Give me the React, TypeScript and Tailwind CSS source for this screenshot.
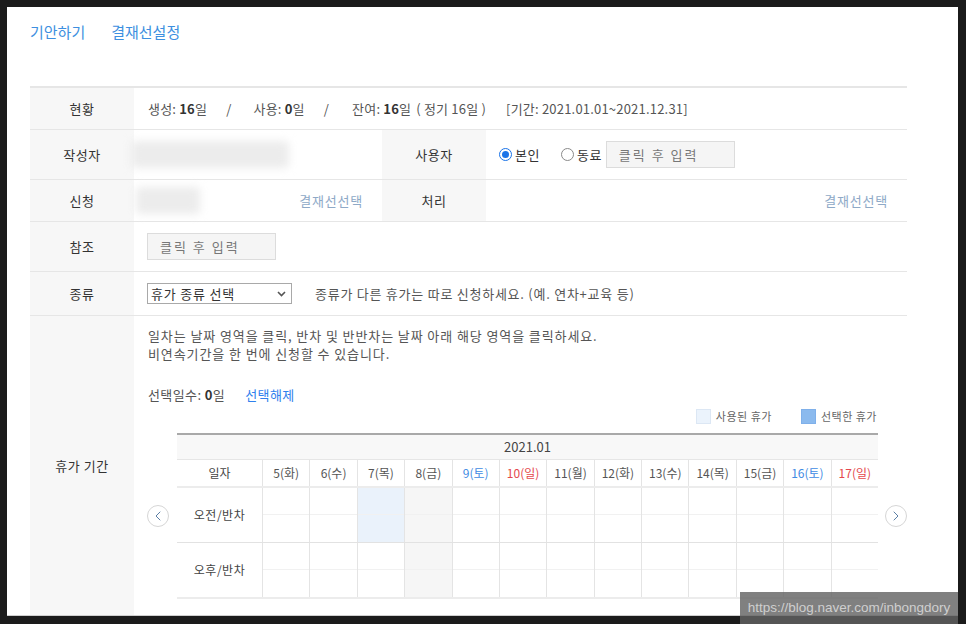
import { ChevronLeft, ChevronRight } from 'lucide-react';

const FONT = { fontFamily: '"Noto Sans CJK KR", "Noto Sans", sans-serif' };

interface Day {
  label: string;
  kind: 'weekday' | 'sat' | 'sun';
}

const DAYS: Day[] = [
  { label: '5(화)', kind: 'weekday' },
  { label: '6(수)', kind: 'weekday' },
  { label: '7(목)', kind: 'weekday' },
  { label: '8(금)', kind: 'weekday' },
  { label: '9(토)', kind: 'sat' },
  { label: '10(일)', kind: 'sun' },
  { label: '11(월)', kind: 'weekday' },
  { label: '12(화)', kind: 'weekday' },
  { label: '13(수)', kind: 'weekday' },
  { label: '14(목)', kind: 'weekday' },
  { label: '15(금)', kind: 'weekday' },
  { label: '16(토)', kind: 'sat' },
  { label: '17(일)', kind: 'sun' },
];

const DAY_COLOR: Record<Day['kind'], string> = {
  weekday: 'text-[#555]',
  sat: 'text-[#3f8be3]',
  sun: 'text-[#e5484d]',
};

function Label({ children, className = '' }: { children: React.ReactNode; className?: string }) {
  return (
    <div
      className={`flex w-[104px] shrink-0 items-center justify-center bg-[#f7f7f7] text-[13px] tracking-[0.5px] text-[#333] ${className}`}
    >
      {children}
    </div>
  );
}

function Radio({ checked, label }: { checked?: boolean; label: string }) {
  return (
    <label className="flex items-center gap-[3px] text-[13px] tracking-[0.5px] text-[#333]">
      <span
        className={`flex h-[13px] w-[13px] items-center justify-center rounded-full border ${
          checked ? 'border-[#1a73e8]' : 'border-[#8a8a8a]'
        }`}
      >
        {checked && <span className="h-[7px] w-[7px] rounded-full bg-[#1a73e8]" />}
      </span>
      {label}
    </label>
  );
}

function FakeInput({ width }: { width: string }) {
  return (
    <div
      className={`flex h-[27px] items-center border border-[#dcdcdc] bg-[#f5f5f5] pl-[12px] text-[13px] tracking-[2px] text-[#777] ${width}`}
    >
      클릭 후 입력
    </div>
  );
}

function NavButton({ dir }: { dir: 'left' | 'right' }) {
  return (
    <button className="flex h-[22px] w-[22px] shrink-0 items-center justify-center rounded-full border border-[#d6d6d6] bg-white text-[#5b7fa6]">
      {dir === 'left' ? <ChevronLeft size={16} strokeWidth={1.5} /> : <ChevronRight size={16} strokeWidth={1.5} />}
    </button>
  );
}

function SlotRow({ label, highlight }: { label: string; highlight?: number }) {
  return (
    <div className="grid grid-cols-[85px_repeat(13,minmax(0,1fr))]">
      <div className="flex h-[54px] items-center justify-center text-[12px] tracking-[0.5px] text-[#444]">{label}</div>
      {DAYS.map((d, i) => {
        const bg = i === highlight ? 'bg-[#eaf2fb]' : i === 3 ? 'bg-[#f6f6f6]' : 'bg-white';
        return (
          <div key={d.label} className={`flex flex-col border-l border-[#e4e4e4] ${bg}`}>
            <div className="h-[27px] border-b border-[#f1f1f1]" />
            <div className="h-[27px]" />
          </div>
        );
      })}
    </div>
  );
}

function Calendar() {
  return (
    <div className="w-[701px] border-t-2 border-b-2 border-t-[#a9a9a9] border-b-[#ececec]">
      <div className="flex h-[24px] items-center justify-center bg-[#f8f8f8] text-[13px] text-[#444]">2021.01</div>
      <div className="grid h-[27px] grid-cols-[85px_repeat(13,minmax(0,1fr))] border-t border-[#e6e6e6]">
        <div className="flex items-center justify-center text-[12px] text-[#444]">일자</div>
        {DAYS.map((d) => (
          <div
            key={d.label}
            className={`flex items-center justify-center border-l border-[#e4e4e4] text-[12px] ${DAY_COLOR[d.kind]}`}
          >
            {d.label}
          </div>
        ))}
      </div>
      <div className="border-t-2 border-[#ececec]">
        <SlotRow label="오전/반차" highlight={2} />
      </div>
      <div className="border-t border-[#e2e2e2]">
        <SlotRow label="오후/반차" />
      </div>
    </div>
  );
}

export default function App() {
  return (
    <div className="relative h-[624px] w-[966px] overflow-hidden bg-[#1b1b1b] pt-[7px] pr-[8px] pb-[8px] pl-[7px]" style={FONT}>
      <div className="flex h-full flex-col border-b border-[#cfcfcf] bg-white pl-[23px]">
        <div className="flex gap-[26px] pt-[15px] text-[15px] leading-[20px] text-[#3d8fe0]">
          <span>기안하기</span>
          <span>결재선설정</span>
        </div>

        <div className="mt-[44px] flex w-[877px] flex-1 flex-col border-t-2 border-[#e6e6e6]">
          {/* 현황 */}
          <div className="flex h-[42px] border-b border-[#e6e6e6]">
            <Label>현황</Label>
            <div className="flex items-center pl-[14px] text-[13px] tracking-[0.2px] text-[#555]">
              <span>
                생성: <b className="text-[#333]">16</b>일
              </span>
              <span className="ml-[19px]">/</span>
              <span className="ml-[22px]">
                사용: <b className="text-[#333]">0</b>일
              </span>
              <span className="ml-[19px]">/</span>
              <span className="ml-[23px]">
                잔여: <b className="text-[#333]">16</b>일
              </span>
              <span className="ml-[5px]">( 정기 16일 )</span>
              <span className="ml-[20px]">[기간: 2021.01.01~2021.12.31]</span>
            </div>
          </div>

          {/* 작성자 / 사용자 */}
          <div className="flex h-[50px] border-b border-[#e6e6e6]">
            <Label>작성자</Label>
            <div className="flex w-[248px] items-center">
              <div className="-ml-[3px] h-[27px] w-[158px] rounded bg-[#ececec] blur-[4px]" />
            </div>
            <Label>사용자</Label>
            <div className="flex items-center pl-[13px]">
              <Radio checked label="본인" />
              <div className="ml-[21px]">
                <Radio label="동료" />
              </div>
              <div className="ml-[4px]">
                <FakeInput width="w-[129px]" />
              </div>
            </div>
          </div>

          {/* 신청 / 처리 */}
          <div className="flex h-[42px] border-b border-[#e6e6e6]">
            <Label>신청</Label>
            <div className="flex w-[248px] items-center justify-between pr-[19px]">
              <div className="ml-[2px] h-[27px] w-[64px] rounded bg-[#ececec] blur-[4px]" />
              <span className="text-[13px] tracking-[0.8px] text-[#8ea9c7]">결재선선택</span>
            </div>
            <Label>처리</Label>
            <div className="flex flex-1 items-center justify-end pr-[19px]">
              <span className="text-[13px] tracking-[0.8px] text-[#8ea9c7]">결재선선택</span>
            </div>
          </div>

          {/* 참조 */}
          <div className="flex h-[50px] border-b border-[#e6e6e6]">
            <Label>참조</Label>
            <div className="flex items-center pl-[13px]">
              <FakeInput width="w-[129px]" />
            </div>
          </div>

          {/* 종류 */}
          <div className="flex h-[44px] border-b border-[#e6e6e6]">
            <Label>종류</Label>
            <div className="flex items-center pl-[13px] text-[13px]">
              <div className="flex h-[21px] w-[145px] items-center justify-between border border-[#a9a9a9] bg-white pr-[5px] pl-[3px] tracking-[0.8px] text-[#333]">
                <span>휴가 종류 선택</span>
                <svg width="9" height="6" viewBox="0 0 9 6" fill="none">
                  <path d="M1 1l3.5 3.5L8 1" stroke="#555" strokeWidth="1.6" />
                </svg>
              </div>
              <span className="ml-[23px] tracking-[0.75px] text-[#555]">
                종류가 다른 휴가는 따로 신청하세요. (예. 연차+교육 등)
              </span>
            </div>
          </div>

          {/* 휴가 기간 */}
          <div className="flex flex-1">
            <Label>휴가 기간</Label>
            <div className="flex flex-1 flex-col">
              <div className="pt-[11px] pl-[14px] text-[13px] leading-[18px] text-[#555]">
                <p className="tracking-[0.9px]">일차는 날짜 영역을 클릭, 반차 및 반반차는 날짜 아래 해당 영역을 클릭하세요.</p>
                <p className="tracking-[0.9px]">비연속기간을 한 번에 신청할 수 있습니다.</p>
                <p className="mt-[23px] tracking-[0.4px]">
                  선택일수: <b className="text-[#333]">0</b>일
                  <span className="ml-[20px] text-[#2f80ed]">선택해제</span>
                </p>
              </div>
              <div className="mt-[4px] flex h-[16px] items-center justify-end gap-[5px] pr-[30px] text-[11px] tracking-[0.5px] text-[#666]">
                <span className="h-[15px] w-[15px] border border-[#dce7f4] bg-[#ebf3fc]" />
                <span>사용된 휴가</span>
                <span className="ml-[24px] h-[15px] w-[15px] border border-[#7fb0ea] bg-[#8bbaee]" />
                <span>선택한 휴가</span>
              </div>
              <div className="mt-[9px] flex items-center pl-[13px]">
                <NavButton dir="left" />
                <div className="ml-[8px]">
                  <Calendar />
                </div>
                <div className="ml-[7px]">
                  <NavButton dir="right" />
                </div>
              </div>
            </div>
          </div>
        </div>
      </div>

      {/* blog watermark */}
      <div
        className="absolute right-[8px] bottom-0 flex h-[32px] w-[218px] items-center justify-center bg-[rgba(99,99,99,0.81)] text-[13.5px] text-[#cfcfcf]"
        style={{ fontFamily: '"Liberation Sans", sans-serif' }}
      >
        https://blog.naver.com/inbongdory
      </div>
    </div>
  );
}
